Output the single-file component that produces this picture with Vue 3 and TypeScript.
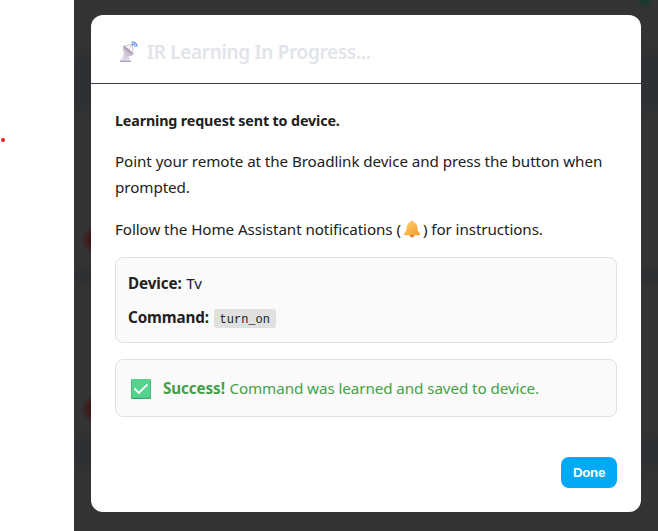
<script setup lang="ts">
interface Detail {
  label: string
  value: string
  code: boolean
}

const details: Detail[] = [
  { label: 'Device:', value: 'Tv', code: false },
  { label: 'Command:', value: 'turn_on', code: true },
]
</script>

<template>
  <div class="page">
    <aside class="gutter"><span class="marker"></span></aside>
    <main class="backdrop">
      <section class="modal" role="dialog">
        <header class="head">
          <svg class="dish" viewBox="0 0 20 22" aria-hidden="true">
            <path d="M5 12l-2 6h8l-2-4z" fill="#d9d0e2" />
            <path d="M2 17.500h7.500l2 2.500H1z" fill="#e3dcea" />
            <path d="M1 19.500h11V21H1z" fill="#b5a3c4" />
            <path d="M4.300 4.500C3 9 5 14 9 15c2 .5 4-.2 5.500-1.300z" fill="#cdc0d6" />
            <path d="M4.300 4.500c2.500.5 8.500 5.500 10.200 9.200-4-1-8.800-5-10.200-9.200z" fill="#aba0b2" />
            <path d="M5 5l8.300-1.500M13.300 3l.7 10M9 9.500L13.300 3" stroke="#b5adb8" stroke-width=".7" fill="none" />
            <circle cx="13.200" cy="3.800" r=".8" fill="#8a8190" />
            <path d="M12.300 1.200c3.200-.9 5.900 1.400 5.600 4.600M13.300 2.900c1.800-.3 2.900 1 2.600 2.900" stroke="#4c8df0" stroke-width="1.100" fill="none" />
          </svg>
          <h2 class="title">IR Learning In Progress...</h2>
        </header>
        <div class="body">
          <p class="lead">Learning request sent to device.</p>
          <p class="line intro">Point your remote at the Broadlink device and press the button when<br />prompted.</p>
          <p class="line follow">
            <span>Follow the Home Assistant notifications (</span>
            <svg class="bell" viewBox="0 0 18 18" aria-hidden="true">
              <defs>
                <linearGradient id="bell-fill" x1="0" x2="1" y1="0" y2="1">
                  <stop offset="0" stop-color="#ffd36b" />
                  <stop offset="1" stop-color="#f69a2c" />
                </linearGradient>
              </defs>
              <circle cx="9" cy="15" r="2.400" fill="#dc7b28" />
              <path d="M9 .8c-1 0-1.600.6-1.700 1.500C4.800 3 3.800 5.200 3.600 7.500c-.2 3-.9 4.300-2.300 5.700-.8.9-.4 2 .8 2h13.800c1.200 0 1.600-1.100.8-2-1.400-1.400-2.100-2.700-2.300-5.700-.2-2.300-1.200-4.500-3.700-5.200C10.600 1.400 10 .8 9 .8z" fill="url(#bell-fill)" />
            </svg>
            <span>) for instructions.</span>
          </p>
          <div class="card details">
            <div v-for="d in details" :key="d.label" class="detail">
              <strong>{{ d.label }}</strong>
              <code v-if="d.code">{{ d.value }}</code>
              <span v-else>{{ d.value }}</span>
            </div>
          </div>
          <div class="card status">
            <svg class="check" viewBox="0 0 20 20" aria-hidden="true">
              <rect width="20" height="20" rx="1.500" fill="#3aa76d" />
              <rect x=".5" width="19" height="18.800" rx="1.200" fill="#55d28b" />
              <path d="M3.500 9.500l4.300 4.400 8.700-8.500" stroke="#fff" stroke-width="1.800" fill="none" />
            </svg>
            <strong>Success!</strong>
            <span class="message">Command was learned and saved to device.</span>
          </div>
        </div>
        <footer class="foot"><button class="done" type="button">Done</button></footer>
      </section>
    </main>
  </div>
</template>

<style>
body {
  background: #fff;
}
</style>

<style scoped>
.page {
  display: flex;
  width: 658px;
  height: 531px;
  overflow: hidden;
  font: 15.2px/25.6px "Noto Sans", "Open Sans", sans-serif;
  letter-spacing: -0.08px;
  color: #212121;
}
.gutter {
  flex: 0 0 74px;
  padding-top: 138px;
  box-sizing: border-box;
}
.marker {
  display: block;
  width: 4px;
  height: 4px;
  margin-left: 1px;
  border-radius: 50%;
  background: #ee1c25;
}
.backdrop {
  flex: 1;
  box-sizing: border-box;
  padding: 15px 17px 19px;
  background:
    radial-gradient(circle at 22px 240px, #431616 0, #3d1919 7px, transparent 15px),
    radial-gradient(circle at 22px 409px, #431616 0, #3d1919 7px, transparent 15px),
    radial-gradient(circle at 571px 0, #103c2c 0, transparent 9px),
    linear-gradient(#333 0 45px, #2e3033 60px 103px, #333 118px 264px, #2f3033 272px 280px, #333 288px 430px, #2e3033 442px 460px, #333 475px);
}
.modal {
  display: flex;
  flex-direction: column;
  height: 497px;
  background: #fff;
  border-radius: 12px;
  overflow: hidden;
}
.head {
  display: flex;
  align-items: center;
  box-sizing: border-box;
  height: 69px;
  padding: 6px 24px 0 28px;
  border-bottom: 1px solid #374151;
}
.dish {
  width: 20px;
  height: 22px;
}
.title {
  margin: 0 0 0 8px;
  font-size: 19px;
  line-height: 28px;
  font-weight: 600;
  letter-spacing: -0.33px;
  color: #e1e4ea;
  white-space: nowrap;
}
.body {
  padding: 24px 24px 0;
  white-space: nowrap;
}
.lead,
.line {
  margin: 0 0 16px;
}
.lead {
  margin-bottom: 14px;
  font-size: 14.300px;
  font-weight: 700;
  letter-spacing: -0.14px;
}
.intro {
  margin-bottom: 17px;
  line-height: 26px;
}
.follow {
  display: flex;
  align-items: center;
  margin-bottom: 14.800px;
}
.bell {
  width: 18px;
  height: 18px;
  margin: 0 2px;
}
.card {
  box-sizing: border-box;
  background: #fafafa;
  border: 1px solid #e0e0e0;
  border-radius: 8px;
}
.details {
  display: flex;
  flex-direction: column;
  gap: 8px;
  padding: 13px 12px 11px;
  height: 86px;
}
.detail {
  display: flex;
  align-items: center;
  gap: 4.500px;
}
code {
  padding: 4px 6px 0;
  margin-top: 2px;
  border-radius: 3px;
  background: #e0e0e0;
  font: 12px/15px "Liberation Mono", monospace;
  letter-spacing: 0;
}
.status {
  display: flex;
  align-items: center;
  height: 58px;
  margin-top: 16px;
  padding: 2px 15px 0;
  color: #43a047;
}
.check {
  width: 20px;
  height: 20px;
  margin-right: 12px;
}
.message {
  margin-left: 4.500px;
}
.foot {
  display: flex;
  justify-content: flex-end;
  margin-top: auto;
  padding: 24px;
}
.done {
  width: 56px;
  height: 31px;
  padding: 0;
  border: 0;
  border-radius: 8px;
  background: #03a9f4;
  color: #fff;
  font: 700 13.300px "Liberation Sans", sans-serif;
  letter-spacing: -0.3px;
}
</style>
